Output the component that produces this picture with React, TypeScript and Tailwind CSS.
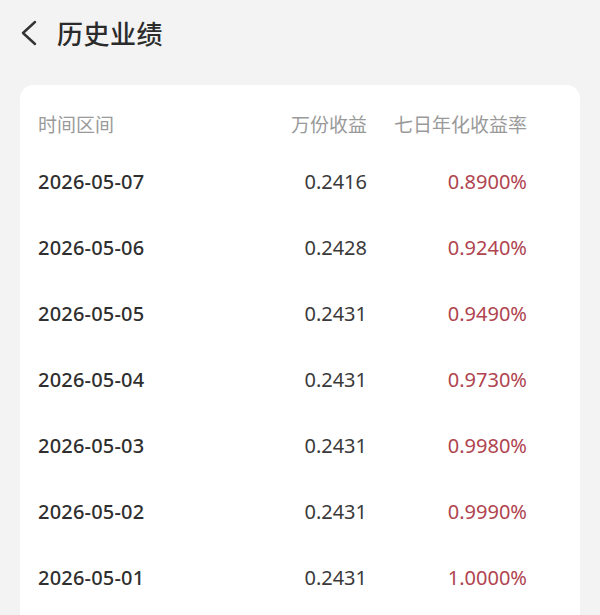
export default function App() {
  const rows = [
    { date: "2026-05-07", income: "0.2416", rate: "0.8900%" },
    { date: "2026-05-06", income: "0.2428", rate: "0.9240%" },
    { date: "2026-05-05", income: "0.2431", rate: "0.9490%" },
    { date: "2026-05-04", income: "0.2431", rate: "0.9730%" },
    { date: "2026-05-03", income: "0.2431", rate: "0.9980%" },
    { date: "2026-05-02", income: "0.2431", rate: "0.9990%" },
    { date: "2026-05-01", income: "0.2431", rate: "1.0000%" },
  ]

  return (
    <div className="w-[600px] h-[615px] overflow-hidden bg-[#f3f3f3] font-['Noto_Sans','Noto_Sans_CJK_SC',sans-serif]">
      <div className="flex items-center h-[64px] pl-[20px]">
        <svg width="18" height="26" viewBox="0 0 18 26" fill="none" className="mt-[1px]">
          <path d="M15 2 L3 13 L15 24" stroke="#333" strokeWidth="2.4" strokeLinecap="round" strokeLinejoin="round" />
        </svg>
        <h1 className="ml-[19px] text-[26px] font-medium text-[#2b2b2b] tracking-[0.5px] font-['Noto_Sans_CJK_SC',sans-serif]">
          历史业绩
        </h1>
      </div>

      <div className="mx-[20px] mt-[21px] bg-white rounded-[14px] pl-[18px] pr-[53px] pt-[24px] pb-[20px]">
        <div className="grid grid-cols-[1fr_150px_160px] h-[30px] items-center text-[19px] text-[#9a9a9a] font-['Noto_Sans_CJK_SC',sans-serif]">
          <span>时间区间</span>
          <span className="text-right">万份收益</span>
          <span className="text-right">七日年化收益率</span>
        </div>
        <div className="mt-[10px]">
          {rows.map((row) => (
            <div key={row.date} className="grid grid-cols-[1fr_150px_160px] h-[66px] items-center text-[20px]">
              <span className="font-medium text-[#2f2f2f] tracking-[0.2px]">{row.date}</span>
              <span className="text-right text-[#3a3a3a]">{row.income}</span>
              <span className="text-right text-[#b0444f]">{row.rate}</span>
            </div>
          ))}
        </div>
      </div>
    </div>
  )
}
